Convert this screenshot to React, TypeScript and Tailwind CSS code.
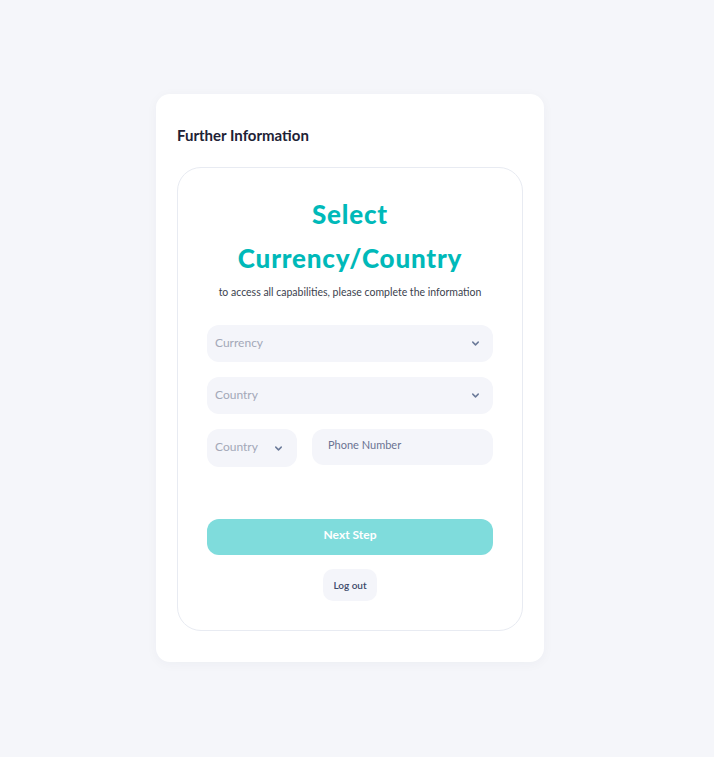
import React from 'react';

const Chevron = () => (
    <svg width="11" height="11" viewBox="0 0 24 24" fill="none" stroke="#6b7a99" strokeWidth="3.2" strokeLinecap="round" strokeLinejoin="round">
        <path d="M6 9l6 6 6-6" />
    </svg>
);

const SelectBox: React.FC<{ label: string; className?: string }> = ({ label, className = '' }) => (
    <div className={`flex items-center justify-between bg-[#f4f5fa] rounded-xl pl-2 pr-3 text-[12px] text-[#a3a8b8] ${className}`}>
        <span className="-mt-[2px]">{label}</span>
        <Chevron />
    </div>
);

const App: React.FC = () => {
    return (
        <div className="min-h-[757px] w-full bg-[#f5f6fa] flex justify-center pt-[94px] pr-[14px]" style={{ fontFamily: 'Lato, "Open Sans", sans-serif' }}>
            <div className="w-[388px] h-[568px] bg-white rounded-[14px] shadow-[0_2px_12px_rgba(30,40,80,0.04)] px-[21px] pt-[32px]">
                <h1 className="text-[15px] font-bold text-[#1e2235] leading-[18px]">Further Information</h1>

                <div className="mt-[23px] h-[464px] border border-[#e8ebf2] rounded-[24px] px-[29px] pt-[24px]">
                    <h2 className="text-center text-[26px] font-black text-[#00b9b9] leading-[44px] tracking-[0.8px]">
                        Select<br />Currency/Country
                    </h2>
                    <p className="text-center text-[10.5px] text-[#3b3f4e] mt-[5px] leading-[14px]">
                        to access all capabilities, please complete the information
                    </p>

                    <div className="mt-[26px] flex flex-col gap-[15px]">
                        <SelectBox label="Currency" className="h-[37px]" />
                        <SelectBox label="Country" className="h-[37px]" />
                        <div className="flex gap-[15px] items-start">
                            <SelectBox label="Country" className="w-[90px] h-[38px] pr-[13px]" />
                            <div className="flex-1 h-[36px] bg-[#f4f5fa] rounded-xl flex items-center px-4 text-[11px] text-[#6b7392]">
                                <span className="-mt-[3px]">Phone Number</span>
                            </div>
                        </div>
                    </div>

                    <button className="mt-[52px] w-full h-[36px] rounded-xl bg-[#7fdcdc] text-white text-[12px] font-bold">
                        <span className="relative -top-[2px]">Next Step</span>
                    </button>
                    <div className="flex justify-center mt-[14px]">
                        <button className="w-[54px] h-[32px] rounded-[10px] bg-[#f4f5fa] text-[10px] text-[#3d4a6b] font-semibold">
                            Log out
                        </button>
                    </div>
                </div>
            </div>
        </div>
    );
};

export default App;
